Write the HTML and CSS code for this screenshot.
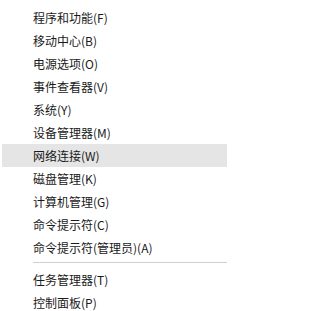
FILE: index.html
```html
<!DOCTYPE html>
<html lang="zh-CN">
<head>
<meta charset="utf-8">
<link rel="stylesheet" href="styles.css">
</head>
<body>
<div class="menu">
  <div class="item">程序和功能(F)</div>
  <div class="item">移动中心(B)</div>
  <div class="item">电源选项(O)</div>
  <div class="item">事件查看器(V)</div>
  <div class="item">系统(Y)</div>
  <div class="item">设备管理器(M)</div>
  <div class="item active">网络连接(W)</div>
  <div class="item">磁盘管理(K)</div>
  <div class="item">计算机管理(G)</div>
  <div class="item">命令提示符(C)</div>
  <div class="item">命令提示符(管理员)(A)</div>
  <div class="sep"></div>
  <div class="item">任务管理器(T)</div>
  <div class="item">控制面板(P)</div>
</div>
</body>
</html>
```
FILE: styles.css
```css
html, body {
  margin: 0;
  padding: 0;
  background: #ffffff;
}
.menu {
  width: 227px;
  padding-top: 6px;
  padding-left: 2px;
  box-sizing: border-box;
  font-family: "Microsoft YaHei UI", "Noto Sans CJK SC", "Noto Sans", sans-serif;
  font-size: 12px;
  color: #1a1a1a;
}
.item {
  height: 23px;
  line-height: 23px;
  padding-left: 31px;
  white-space: nowrap;
}
.item.active {
  background: #e5e5e5;
}
.sep {
  height: 1px;
  margin: 3px 0 5px 31px;
  background: #cfcfcf;
}
```
